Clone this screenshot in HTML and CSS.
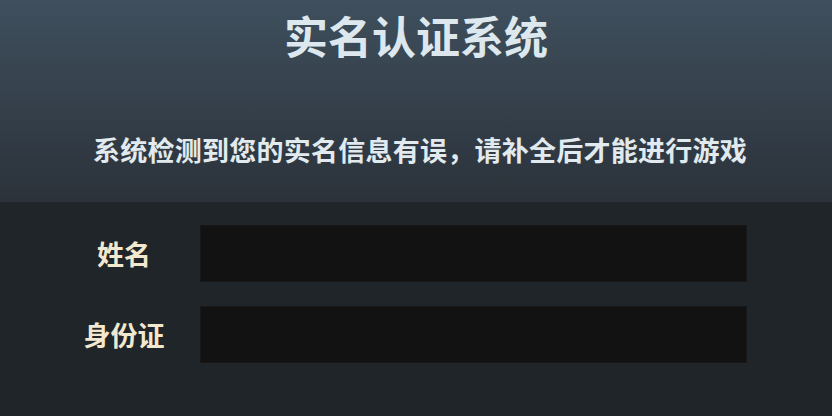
FILE: index.html
```html
<!DOCTYPE html>
<html lang="zh-CN">
<head>
  <meta charset="UTF-8">
  <meta name="viewport" content="width=device-width, initial-scale=1.0">
  <title>实名认证系统</title>
  <link rel="stylesheet" href="styles.css">
</head>
<body>

  <div class="header">
    <h1>实名认证系统</h1>
    <p class="notice">系统检测到您的实名信息有误，请补全后才能进行游戏</p>
  </div>

  <form class="verify-form">
    <div class="row">
      <label for="realName">姓名</label>
      <input type="text" id="realName">
    </div>
    <div class="row">
      <label for="idCard">身份证</label>
      <input type="text" id="idCard">
    </div>
  </form>

</body>
</html>
```

FILE: styles.css
```css
body {
  font-family: "Noto Sans CJK SC", "Noto Sans", sans-serif;
  background-color: #1f2528;
  margin: 0;
  width: 832px;
  height: 416px;
  overflow: hidden;
}

.header {
  height: 202px;
  background: linear-gradient(to bottom, #3f4f5d, #2b323a);
  text-align: center;
  overflow: hidden;
}

.header h1 {
  margin: 0;
  height: 70px;
  line-height: 70px;
  font-size: 44px;
  font-weight: bold;
  color: #dde8ee;
}

.notice {
  margin: 60px 0 0;
  padding-left: 8px;
  line-height: 40px;
  font-size: 27px;
  letter-spacing: 0.25px;
  font-weight: bold;
  color: #e1eaee;
}

.verify-form {
  padding-top: 23px;
  display: flex;
  flex-direction: column;
  gap: 24px;
}

.row {
  display: flex;
  align-items: center;
}

.row label {
  flex: none;
  width: 152px;
  margin-left: 48px;
  text-align: center;
  font-size: 27px;
  font-weight: bold;
  color: #f2e8cf;
}

.row input {
  width: 547px;
  height: 57px;
  box-sizing: border-box;
  background-color: #121212;
  border: 1px solid #181818;
  outline: none;
  color: #ddd;
  font-size: 20px;
  padding: 0 12px;
}
```
